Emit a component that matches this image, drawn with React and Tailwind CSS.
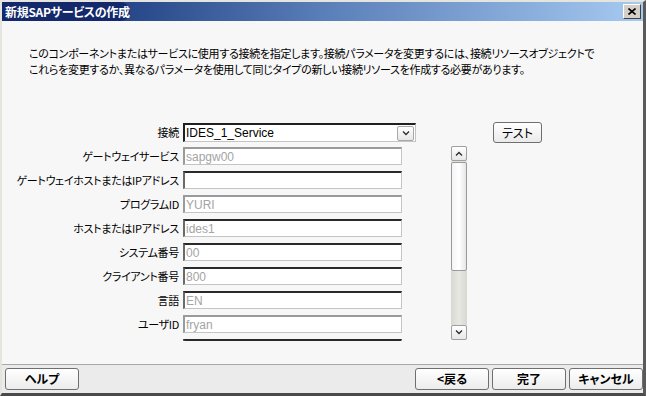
import React from 'react';

const fields = [
    { label: 'ゲートウェイサービス', value: 'sapgw00', dark: false },
    { label: 'ゲートウェイホストまたはIPアドレス', value: '', dark: true },
    { label: 'プログラムID', value: 'YURI', dark: false },
    { label: 'ホストまたはIPアドレス', value: 'ides1', dark: true },
    { label: 'システム番号', value: '00', dark: true },
    { label: 'クライアント番号', value: '800', dark: true },
    { label: '言語', value: 'EN', dark: true },
    { label: 'ユーザID', value: 'fryan', dark: false },
    // scrolled below the visible area, only the top border shows
    { label: '', value: '', dark: true },
];

const jp = "font-['Noto_Sans_CJK_JP',sans-serif] [font-feature-settings:'palt']";
const latin = "font-['Liberation_Sans',Arial,sans-serif]";

const Chevron = ({ up = false }) => (
    <svg width="8" height="5" viewBox="0 0 8 5" className="block">
        <path d={up ? 'M1 4.5L4 1.5L7 4.5' : 'M1 0.5L4 3.5L7 0.5'} fill="none" stroke="#2a2a2a" strokeWidth="1.3" />
    </svg>
);

const WizButton = ({ children, className = '' }) => (
    <button
        type="button"
        className={`h-[22px] rounded-[3px] border border-[#6f6f6f] bg-gradient-to-b from-white to-[#ececec] text-[12px] font-semibold text-black leading-none flex items-center justify-center ${jp} ${className}`}
    >
        {children}
    </button>
);

export default function App() {
    return (
        <div className="w-[646px] h-[396px] bg-[#d4d0c8] border-t-2 border-l-2 border-t-[#e6e4de] border-l-[#e6e4de] border-r-[3px] border-b-[3px] border-r-[#5a5a5a] border-b-[#4a4a4a] flex flex-col overflow-hidden">
            {/* title bar */}
            <div className="h-[19px] shrink-0 bg-gradient-to-r from-[#0a246a] via-[#5a7eb8] to-[#a6caf0] flex items-center justify-between">
                <div className="h-full w-[128px] rounded-r-full bg-[#13296c] flex items-center pl-[3px]">
                    <span className={`text-[12px] font-bold text-white leading-none whitespace-nowrap tracking-[-0.3px] ${jp}`}>新規SAPサービスの作成</span>
                </div>
                <button
                    type="button"
                    className="mr-[2px] w-[18px] h-[15px] bg-[#d4d0c8] border border-t-white border-l-white border-r-[#404040] border-b-[#404040] flex items-center justify-center"
                >
                    <svg width="8" height="7" viewBox="0 0 8 7">
                        <path d="M0.5 0.5L7.5 6.5M7.5 0.5L0.5 6.5" stroke="#000" strokeWidth="1.6" />
                    </svg>
                </button>
            </div>

            {/* content */}
            <div className="h-[344px] shrink-0 bg-[#f7f7f7] border-b border-[#a8a8a8] pt-[24px]">
                <p className={`pl-[27px] text-[11px] leading-[16px] text-black whitespace-nowrap tracking-[-0.3px] ${jp}`}>
                    このコンポーネントまたはサービスに使用する接続を指定します。接続パラメータを変更するには、接続リソースオブジェクトで
                    <br />
                    これらを変更するか、異なるパラメータを使用して同じタイプの新しい接続リソースを作成する必要があります。
                </p>

                <div className="mt-[46px] flex items-center h-[19px]">
                    <span className={`w-[177px] text-right text-[11px] leading-none tracking-[-0.3px] ${jp}`}>接続</span>
                    <div className="ml-[4px] w-[233px] h-[19px] bg-white border-t-2 border-l-2 border-t-[#202020] border-l-[#202020] border-r border-b border-r-[#c4c4c4] border-b-[#c4c4c4] flex items-center justify-between">
                        <span className={`pl-[1px] text-[12px] leading-none text-black ${latin}`}>IDES_1_Service</span>
                        <span className="mr-[1px] w-[17px] h-[15px] rounded-[2px] border border-[#a8a8a8] bg-gradient-to-b from-white to-[#e6e6e6] flex items-center justify-center">
                            <Chevron />
                        </span>
                    </div>
                    <button
                        type="button"
                        className={`ml-[77px] w-[49px] h-[21px] rounded-[3px] border border-[#6f6f6f] bg-gradient-to-b from-white to-[#eaeaea] text-[12px] leading-none flex items-center justify-center ${jp}`}
                    >
                        テスト
                    </button>
                </div>

                <div className="mt-[4px] flex">
                    <div className="w-[400px] h-[195px] overflow-hidden pt-[1px] flex flex-col gap-[6px]">
                        {fields.map((f, i) => (
                            <div key={i} className="flex items-center h-[18px] shrink-0">
                                <span className={`w-[177px] text-right text-[11px] leading-none whitespace-nowrap tracking-[-0.3px] ${jp}`}>{f.label}</span>
                                <div
                                    className={`ml-[4px] w-[219px] h-[18px] bg-white border-t-2 border-l-2 border-r border-b border-r-[#c4c4c4] border-b-[#c4c4c4] flex items-center ${
                                        f.dark ? 'border-t-[#2a2a2a] border-l-[#6a6a6a]' : 'border-t-[#9a9a9a] border-l-[#9a9a9a]'
                                    }`}
                                >
                                    <span className={`pl-[1px] text-[12px] leading-none text-[#a4a4a4] ${latin}`}>{f.value}</span>
                                </div>
                            </div>
                        ))}
                    </div>

                    {/* scrollbar */}
                    <div className="ml-[49px] w-[16px] h-[194px] flex flex-col bg-[#e3e3dc]">
                        <div className="h-[15px] shrink-0 rounded-[2px] border border-[#a0a0a0] bg-gradient-to-b from-white to-[#e8e8e8] flex items-center justify-center">
                            <Chevron up />
                        </div>
                        <div className="mt-[1px] h-[109px] shrink-0 rounded-[2px] border border-[#9a9a9a] bg-gradient-to-r from-[#f4f4f4] via-white to-[#e6e6e6]" />
                        <div className="flex-1 bg-gradient-to-r from-[#d8d8d2] via-[#e8e8e2] to-[#d8d8d2]" />
                        <div className="h-[15px] shrink-0 rounded-[2px] border border-[#a0a0a0] bg-gradient-to-b from-white to-[#e8e8e8] flex items-center justify-center">
                            <Chevron />
                        </div>
                    </div>
                </div>
            </div>

            {/* bottom bar */}
            <div className="flex-1 bg-[#ebebeb] flex items-center pl-[3px]">
                <WizButton className="w-[74px]">ヘルプ</WizButton>
                <div className="flex-1" />
                <div className="flex gap-[3px]">
                    <WizButton className="w-[74px]">&lt;戻る</WizButton>
                    <WizButton className="w-[74px]">完了</WizButton>
                    <WizButton className="w-[74px]">キャンセル</WizButton>
                </div>
            </div>
        </div>
    );
}
